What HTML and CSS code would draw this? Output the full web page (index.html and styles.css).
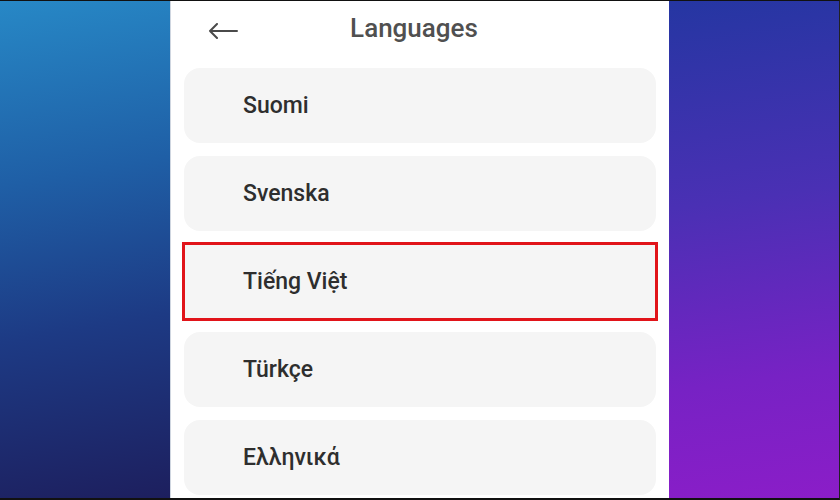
FILE: index.html
```html
<!DOCTYPE html>
<html>
<head>
<meta charset="utf-8">
<link rel="stylesheet" href="styles.css">
</head>
<body>
<div class="frame">
  <div class="side side-left"></div>
  <div class="phone">
    <div class="header">
      <svg class="back" width="30" height="16" viewBox="0 0 30 16">
        <path d="M29 8H2M9 1L2 8l7 7" fill="none" stroke="#4a4a4a" stroke-width="2" stroke-linecap="round" stroke-linejoin="round"/>
      </svg>
      <div class="title">Languages</div>
    </div>
    <div class="list">
      <div class="card">Suomi</div>
      <div class="card">Svenska</div>
      <div class="card selected">Tiếng Việt</div>
      <div class="card">Türkçe</div>
      <div class="card">Ελληνικά</div>
    </div>
  </div>
  <div class="side side-right"></div>
</div>
</body>
</html>
```
FILE: styles.css
```css
html, body {
  margin: 0;
  padding: 0;
  width: 840px;
  height: 500px;
  overflow: hidden;
  background: #000;
}
.frame {
  box-sizing: border-box;
  width: 840px;
  height: 500px;
  border-top: 1px solid #111;
  border-bottom: 2px solid #111;
  border-right: 1px solid #222;
  display: grid;
  grid-template-columns: 171px 498px 1fr;
  font-family: Roboto, "Noto Sans", sans-serif;
}
.side-left {
  background: linear-gradient(170deg, #2788c6 0%, #1f5fa6 35%, #1d3a84 65%, #1d1f5e 100%);
  border-right: 1px solid #cfd6e0;
}
.side-right {
  background: linear-gradient(172deg, #2536a2 0%, #4a30b4 40%, #7722c4 75%, #8b1dc8 100%);
}
.phone {
  background: #fff;
  overflow: hidden;
  display: flex;
  flex-direction: column;
}
.header {
  height: 67px;
  display: flex;
  align-items: center;
  position: relative;
  padding-left: 37px;
}
.back {
  display: block;
  margin-top: -8px;
}
.title {
  position: absolute;
  left: 0;
  right: 12px;
  top: 12px;
  text-align: center;
  font-size: 26px;
  font-weight: 500;
  color: #505050;
}
.list {
  display: flex;
  flex-direction: column;
  gap: 13px;
  padding: 0 13px 0 13px;
}
.card {
  height: 75px;
  flex: none;
  background: #f5f5f5;
  border-radius: 16px;
  display: flex;
  align-items: center;
  padding-left: 59px;
  font-size: 23px;
  font-weight: 500;
  color: #2e2e2e;
}
.card.selected {
  border-radius: 0;
  outline: 3px solid #e1141a;
  outline-offset: -1px;
}
```
